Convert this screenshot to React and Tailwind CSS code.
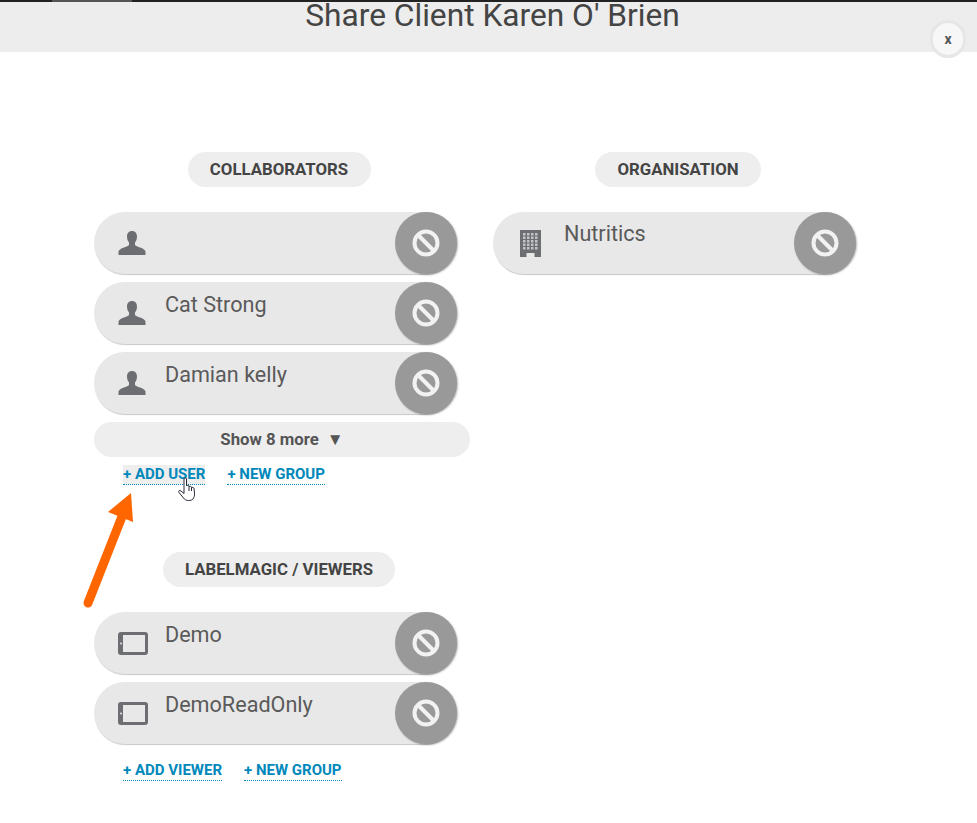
const PersonIcon = () => (
  <svg width="28" height="24" viewBox="0 0 28 24" fill="#6d6e72">
    <path d="M14 0C10.900 0 9 2.200 9 5.500 9 8 9.800 10 11 11.500V13.500C11 14.800 9 15.500 6 16.500 3 17.500 1 18.500.5 20.500V24H27.500V20.500C27 18.500 25 17.500 22 16.500 19 15.500 17 14.800 17 13.500V11.500C18.200 10 19 8 19 5.500 19 2.200 17.100 0 14 0Z" />
  </svg>
);

const TabletIcon = () => (
  <svg width="30" height="23" viewBox="0 0 30 23" fill="none">
    <rect x="1.500" y="1.500" width="27" height="20" rx="1.500" stroke="#6d6e72" strokeWidth="3" />
    <rect x="1" y="1" width="4" height="21" rx="1" fill="#6d6e72" />
    <circle cx="3" cy="11.500" r="1" fill="#e8e8e8" />
  </svg>
);

const BuildingIcon = () => (
  <svg width="21" height="27" viewBox="0 0 21 27" fill="#6d6e72">
    <path d="M0 0h21v27h-6.500v-4h-8v4H0z" />
    {[3, 6.500, 10, 13.500, 17].map((y) =>
      [3, 7, 11, 15].map((x) => <rect key={`${x}-${y}`} x={x} y={y} width="2.500" height="2.500" fill="#c4c4c6" />)
    )}
  </svg>
);

const BlockIcon = () => (
  <svg width="30" height="30" viewBox="0 0 30 30" fill="none" stroke="#f2f2f2" strokeWidth="4">
    <circle cx="15" cy="15" r="11.500" />
    <path d="M7 7l16 16" />
  </svg>
);

function Pill({ label, className }) {
  return (
    <div className="flex justify-center">
      <div className={`h-[35px] rounded-full bg-[#eeeeee] flex items-center justify-center text-[16.800px] font-bold text-[#444444] ${className}`}>
        {label}
      </div>
    </div>
  );
}

function Chip({ icon, name, iconBox = "pl-[24px]", nameBox = "pt-[7px]" }) {
  return (
    <div className="w-[363px] h-[62px] rounded-full bg-[#e8e8e8] shadow-[0_2px_1px_-1px_rgba(0,0,0,0.22)] flex">
      <div className={`w-[71px] ${iconBox} flex items-center shrink-0`}>{icon}</div>
      <div className={`flex-1 ${nameBox} text-[21.600px] leading-[32px] text-[#5a5a5a]`}>{name}</div>
      <div className="w-[62px] h-[62px] rounded-full bg-[#999999] shadow-[1px_1px_2px_rgba(0,0,0,0.3)] flex items-center justify-center">
        <BlockIcon />
      </div>
    </div>
  );
}

function ActionLink({ children, className = "" }) {
  return (
    <a className={`text-[15px] leading-[19px] font-bold text-[#0088bb] border-b border-dotted border-[#0088bb] ${className}`}>
      {children}
    </a>
  );
}

const collaborators = ["", "Cat Strong", "Damian kelly"];
const viewers = ["Demo", "DemoReadOnly"];

export default function App() {
  return (
    <div className="relative w-[977px] h-[823px] overflow-hidden bg-white font-['Roboto',sans-serif]">
      <div className="h-[2px] flex bg-[#222222]">
        <div className="w-[52px]" />
        <div className="w-[80px] bg-[#555555]" />
      </div>
      <header className="h-[50px] bg-[#ededed] flex justify-center pl-[8px]">
        <h1 className="text-[31.700px] leading-[30px] -mt-[1px] text-[#444444]">Share Client Karen O' Brien</h1>
      </header>

      {/* Close button */}
      <button className="absolute left-[930px] top-[20px] w-[36px] h-[38px] rounded-full bg-[#f7f7f7] border-[3px] border-[#e6e6e6] flex items-center justify-center text-[14px] font-bold text-[#555555]">
        x
      </button>

      <div className="flex pl-[94px] pt-[100px]">
        <section className="w-[370px] mr-[29px]">
          <Pill label="COLLABORATORS" className="w-[183px]" />
          <div className="mt-[25px] flex flex-col gap-[8px]">
            {collaborators.map((name, i) => (
              <Chip key={i} name={name} icon={<PersonIcon />} />
            ))}
          </div>
          <div className="mt-[8px] w-[376px] h-[35px] rounded-full bg-[#eeeeee] flex items-center justify-center text-[16.800px] font-bold text-[#555555]">
            Show 8 more <span className="ml-[8px] text-[17px] leading-none">▼</span>
          </div>
          <div className="mt-[8px] pl-[29px] flex gap-[22px]">
            <ActionLink className="bg-[#eeeeee]">+ ADD USER</ActionLink>
            <ActionLink>+ NEW GROUP</ActionLink>
          </div>

          <div className="mt-[67px]">
            <Pill label="LABELMAGIC / VIEWERS" className="w-[232px]" />
          </div>
          <div className="mt-[25px] flex flex-col gap-[8px]">
            {viewers.map((name) => (
              <Chip key={name} name={name} icon={<TabletIcon />} iconBox="pl-[24px] pt-[1px]" />
            ))}
          </div>
          <div className="mt-[17px] pl-[29px] flex gap-[22px]">
            <ActionLink>+ ADD VIEWER</ActionLink>
            <ActionLink>+ NEW GROUP</ActionLink>
          </div>
        </section>

        <section className="w-[370px]">
          <Pill label="ORGANISATION" className="w-[166px]" />
          <div className="mt-[25px]">
            <Chip name="Nutritics" icon={<BuildingIcon />} iconBox="pl-[27px]" nameBox="pt-[6px]" />
          </div>
        </section>
      </div>

      {/* Annotation arrow */}
      <svg className="absolute left-[78px] top-[490px]" width="60" height="120" viewBox="0 0 60 120" fill="#ff6600">
        <path d="M53 3L30 22 55 32z" />
        <path d="M10 113L45 24" stroke="#ff6600" strokeWidth="9" strokeLinecap="round" />
      </svg>

      {/* Hand cursor */}
      <svg className="absolute left-[178px] top-[477px]" width="20" height="25" viewBox="0 0 20 25" fill="#ffffff" stroke="#2a2a3a" strokeWidth="1" strokeLinejoin="round">
        <path d="M6 2c0-1.300 2.500-1.300 2.500 0v7c0-1 2.300-1 2.500 0v1c0-1 2.300-1 2.500 .2v.8c0-1 2.400-.8 2.500 .5l.5 4.500c.3 2.500-.5 4.500-1.500 6-1 1-2.500 1.500-4.500 1.500-2.500 0-4-1-5-2.500L1 15.500c-1-1.500.5-2.800 2-1.500l3 2.500z" />
        <path d="M11 10v4M13.500 11v3" fill="none" />
      </svg>
    </div>
  );
}
